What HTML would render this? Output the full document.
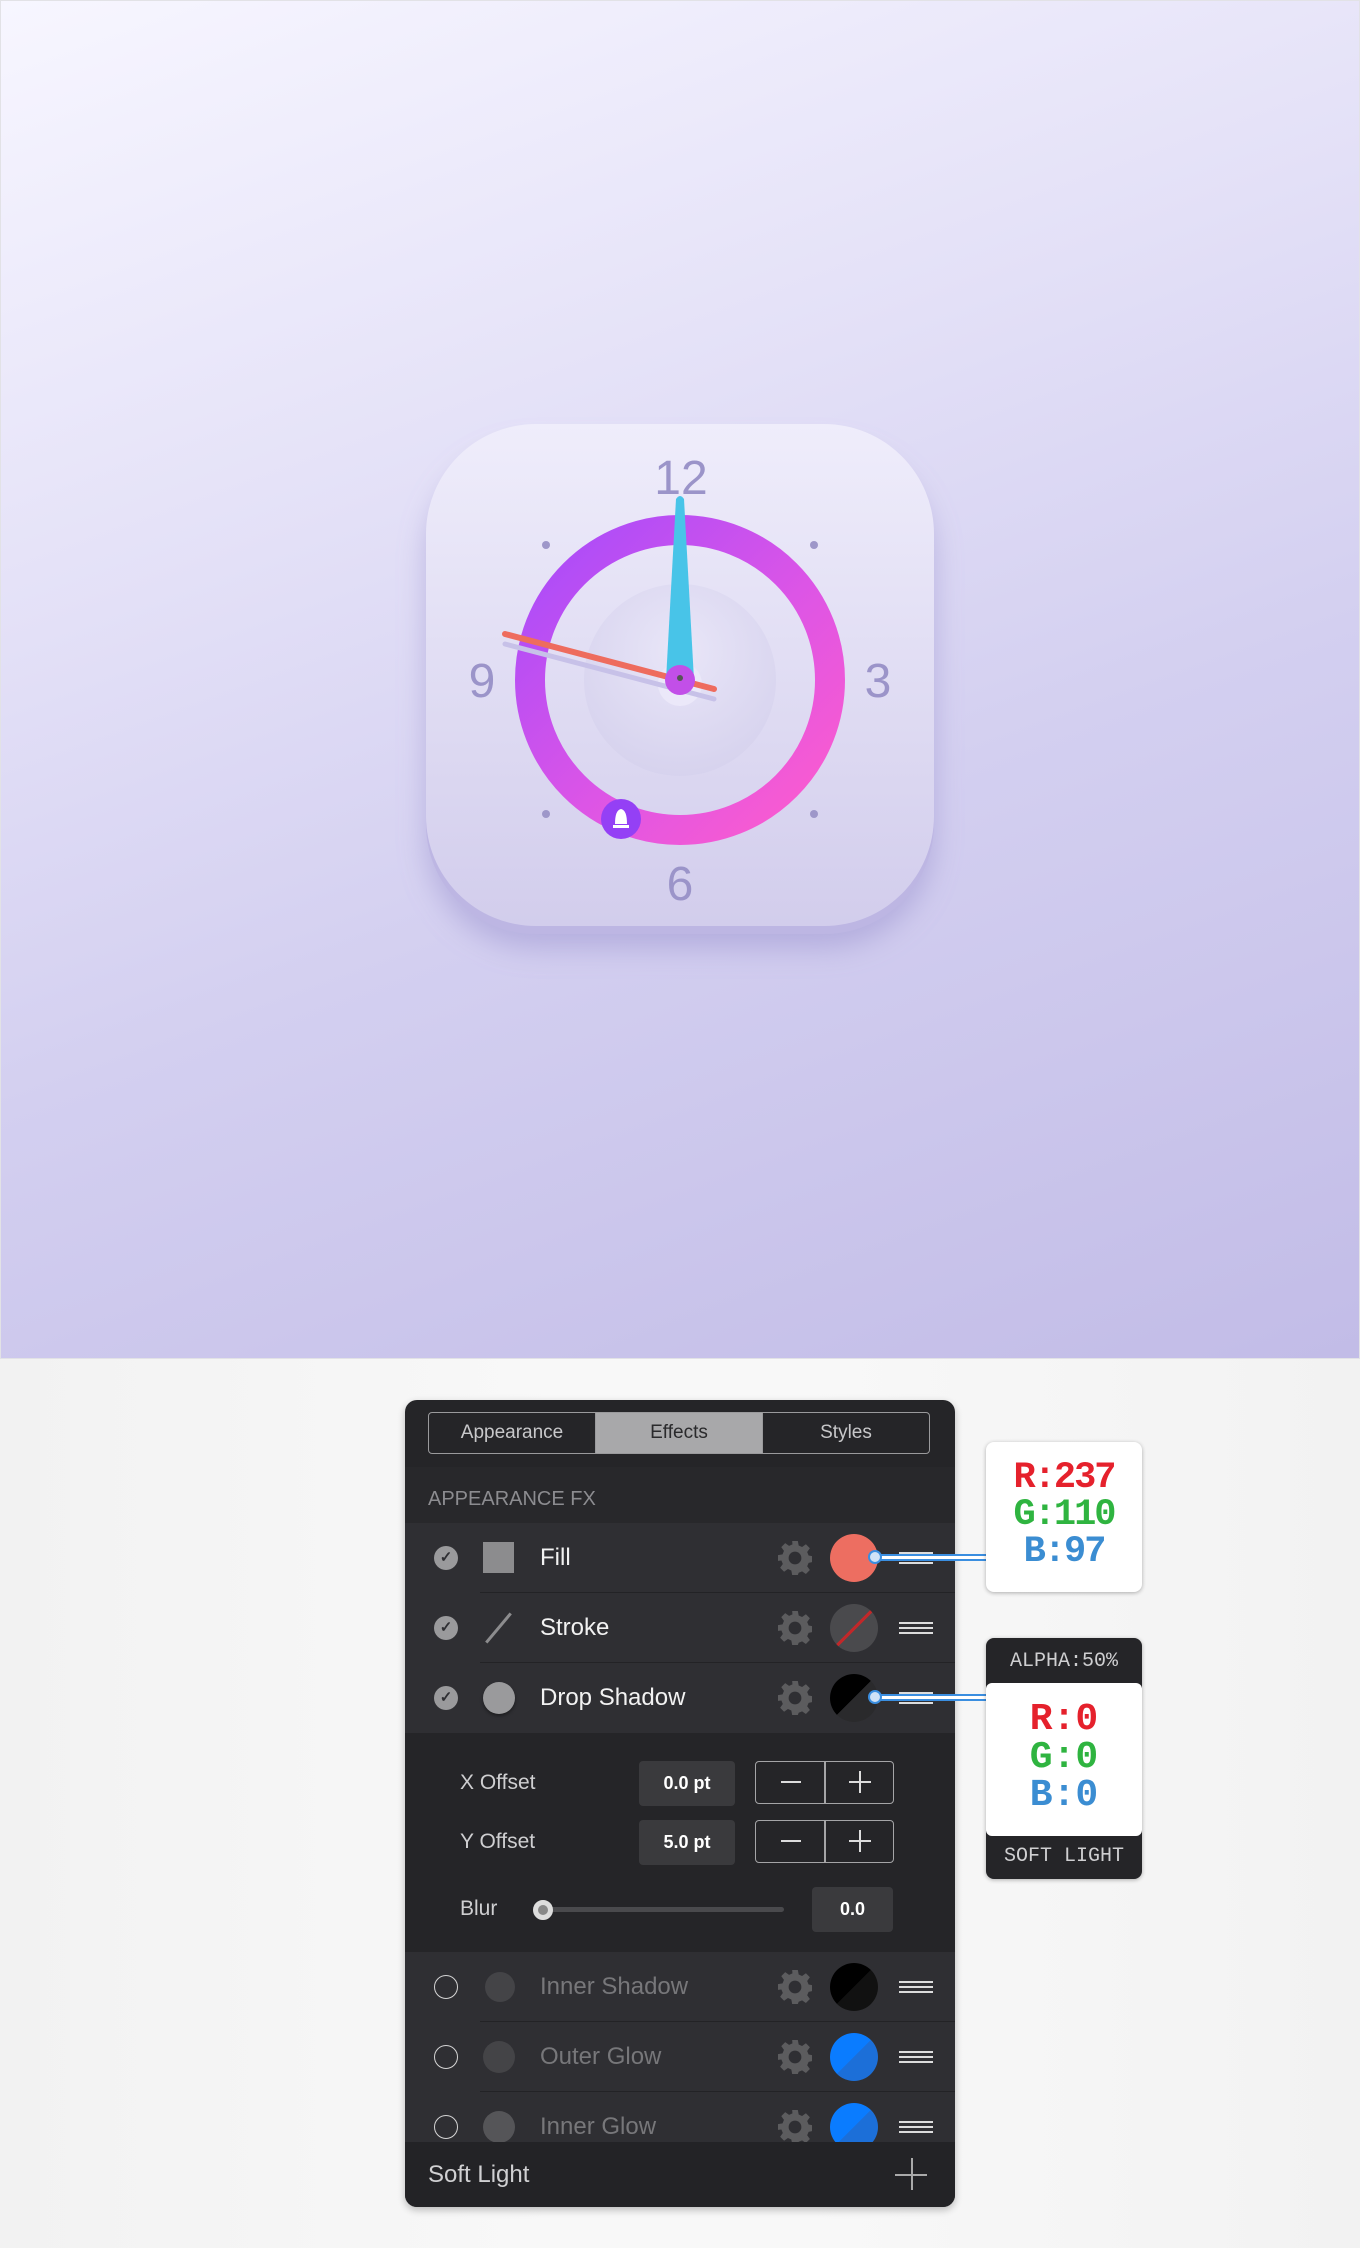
<!DOCTYPE html>
<html><head><meta charset="utf-8">
<style>
*{margin:0;padding:0;box-sizing:border-box}
body{width:1360px;height:2248px;background:#f5f5f5;font-family:"Liberation Sans",sans-serif;position:relative;overflow:hidden}
.top{position:absolute;left:0;top:0;width:1360px;height:1359px;background:linear-gradient(160deg,#f7f6ff 0%,#e3e0f7 35%,#d3cff0 60%,#c2bce7 100%);border:1px solid #e2e2e6}
.bot{position:absolute;left:0;top:1359px;width:1360px;height:889px;background:linear-gradient(90deg,#f2f2f2,#f8f8f8 40%,#f8f8f8 60%,#f2f2f2)}
.panel{position:absolute;left:405px;top:1400px;width:550px;height:807px;background:#252528;border-radius:12px;overflow:hidden;box-shadow:0 3px 8px rgba(0,0,0,.25)}
.a{position:absolute}
.tabs{left:23px;top:12px;width:502px;height:42px;border:1.5px solid #9a9a9c;border-radius:4px;display:flex;overflow:hidden}
.tabs div{flex:1;text-align:center;line-height:39px;color:#c8c8ca;font-size:19px}
.tabs div+div{border-left:1.5px solid #9a9a9c}
.row{position:absolute;left:0;width:550px;height:70px;background:#2f2f33}
.sep{position:absolute;left:75px;right:0;bottom:0;height:1.5px;background:#232326}
.lbl{position:absolute;left:135px;top:0;line-height:70px;font-size:24px;color:#f2f2f2}
.chk{position:absolute;left:29px;top:23px;width:24px;height:24px;border-radius:50%;background:#9a9a9c;color:#2f2f33;font-size:15px;text-align:center;line-height:24px;font-weight:bold}
.ring{position:absolute;left:29px;top:23px;width:24px;height:24px;border-radius:50%;border:1.5px solid #d5d5d5}
.sw{position:absolute;left:425px;top:11px;width:48px;height:48px;border-radius:50%}
.menu{position:absolute;left:494px;top:29px;width:34px;height:12px;border-top:2px solid #ddd;border-bottom:2px solid #ddd}
.menu:after{content:"";position:absolute;left:0;right:0;top:3px;height:2px;background:#ddd}
.gear{position:absolute;left:373px;top:18px}
.val{position:absolute;width:96px;height:45px;background:#3a3a3d;border-radius:4px;color:#fff;font-weight:bold;font-size:18px;text-align:center;line-height:45px}
.pm{position:absolute;left:350px;width:139px;height:43px;border:1.5px solid #a5a5a7;border-radius:4px}
.pm:before{content:"";position:absolute;left:68px;top:0;bottom:0;width:1.5px;background:#a5a5a7}
.olbl{position:absolute;left:55px;font-size:21px;color:#cfcfd1}
.mono{font-family:"Liberation Mono","DejaVu Sans Mono",monospace;font-weight:bold}
</style></head><body>
<div class="top">
<svg width="1360" height="1359" style="position:absolute;left:-1px;top:-1px">
<defs>
<linearGradient id="ig" x1="0" y1="0" x2="0" y2="1"><stop offset="0" stop-color="#efedfb"/><stop offset="1" stop-color="#d2cdec"/></linearGradient>
<linearGradient id="rg" x1="0" y1="0" x2="1" y2="1"><stop offset="0" stop-color="#a64bfb"/><stop offset="0.55" stop-color="#dc55e6"/><stop offset="1" stop-color="#ff5ccc"/></linearGradient>
<radialGradient id="dg" cx="0.5" cy="0.35" r="0.7"><stop offset="0" stop-color="#e9e6f8"/><stop offset="1" stop-color="#d5d1ed"/></radialGradient>
<filter id="sh" x="-20%" y="-20%" width="140%" height="150%"><feDropShadow dx="0" dy="14" stdDeviation="14" flood-color="#8f86c9" flood-opacity="0.45"/></filter>
</defs>
<rect x="426" y="434" width="508" height="500" rx="110" fill="#bdb6e3" filter="url(#sh)"/>
<rect x="426" y="424" width="508" height="502" rx="110" fill="url(#ig)"/>
<circle cx="680" cy="680" r="96" fill="url(#dg)"/>
<circle cx="680" cy="680" r="150" fill="none" stroke="url(#rg)" stroke-width="30"/>
<g fill="#9e97c9"><circle cx="546" cy="545" r="4"/><circle cx="814" cy="545" r="4"/><circle cx="546" cy="814" r="4"/><circle cx="814" cy="814" r="4"/></g>
<g fill="#9b94c9" font-family="Liberation Sans,sans-serif" font-size="48" text-anchor="middle">
<text x="681" y="494">12</text><text x="482" y="697">9</text><text x="878" y="697">3</text><text x="680" y="900">6</text></g>
<circle cx="680" cy="684" r="22" fill="#ebe8f9"/>
<line x1="505" y1="644" x2="714" y2="699" stroke="#c7c1e8" stroke-width="5" stroke-linecap="round"/>
<line x1="505" y1="634" x2="714" y2="689" stroke="#ee6c5e" stroke-width="6" stroke-linecap="round"/>
<path d="M676 499 Q680 493 684 499 L694 680 L666 680 Z" fill="#48c4e8"/>
<circle cx="680" cy="680" r="15" fill="#c24fe8"/>
<circle cx="680" cy="678" r="3" fill="#555"/>
<circle cx="621" cy="819" r="20" fill="#9440f5"/>
<path d="M615 824 Q615 810 621 809 Q627 810 627 824 Z M613 825 h16 v3 h-16 Z" fill="#fff"/>
</svg>
</div>
<div class="bot"></div>

<div class="panel">
<div class="a tabs"><div>Appearance</div><div style="background:#a8a8aa;color:#2a2a2c">Effects</div><div>Styles</div></div>
<div class="a" style="left:0;top:67px;width:550px;height:56px;background:#28282b"></div>
<div class="a" style="left:23px;top:88px;font-size:20px;color:#8c8c90">APPEARANCE FX</div>

<div class="row" style="top:123px"><div class="chk">✓</div><div class="a" style="left:78px;top:19px;width:31px;height:31px;background:#8c8c8e"></div><div class="lbl">Fill</div>
<svg class="gear" width="34" height="34" viewBox="0 0 24 24"><path fill="#5c5c5e" d="M10 0h4l.6 3.2 2.4 1 2.7-1.9 2.8 2.8-1.9 2.7 1 2.4 3.2.6v4l-3.2.6-1 2.4 1.9 2.7-2.8 2.8-2.7-1.9-2.4 1L14 24h-4l-.6-3.2-2.4-1-2.7 1.9-2.8-2.8 1.9-2.7-1-2.4L0 14v-4l3.2-.6 1-2.4-1.9-2.7 2.8-2.8 2.7 1.9 2.4-1zM12 7.5a4.5 4.5 0 1 0 0 9 4.5 4.5 0 0 0 0-9z"/></svg>
<div class="sw" style="background:#ed6e61"></div><div class="menu"></div><div class="sep"></div></div>

<div class="row" style="top:193px"><div class="chk">✓</div><div class="a" style="left:92px;top:16px;width:3px;height:38px;background:#8c8c8e;transform:rotate(40deg)"></div><div class="lbl">Stroke</div>
<svg class="gear" width="34" height="34" viewBox="0 0 24 24"><path fill="#5c5c5e" d="M10 0h4l.6 3.2 2.4 1 2.7-1.9 2.8 2.8-1.9 2.7 1 2.4 3.2.6v4l-3.2.6-1 2.4 1.9 2.7-2.8 2.8-2.7-1.9-2.4 1L14 24h-4l-.6-3.2-2.4-1-2.7 1.9-2.8-2.8 1.9-2.7-1-2.4L0 14v-4l3.2-.6 1-2.4-1.9-2.7 2.8-2.8 2.7 1.9 2.4-1zM12 7.5a4.5 4.5 0 1 0 0 9 4.5 4.5 0 0 0 0-9z"/></svg>
<div class="sw" style="background:linear-gradient(135deg,#4a4a4d 48%,#c0282a 48%,#c0282a 53%,#4a4a4d 53%)"></div><div class="menu"></div><div class="sep"></div></div>

<div class="row" style="top:263px"><div class="chk">✓</div><div class="a" style="left:78px;top:19px;width:32px;height:32px;border-radius:50%;background:#9a9a9c;box-shadow:0 2px 3px rgba(0,0,0,.4)"></div><div class="lbl">Drop Shadow</div>
<svg class="gear" width="34" height="34" viewBox="0 0 24 24"><path fill="#5c5c5e" d="M10 0h4l.6 3.2 2.4 1 2.7-1.9 2.8 2.8-1.9 2.7 1 2.4 3.2.6v4l-3.2.6-1 2.4 1.9 2.7-2.8 2.8-2.7-1.9-2.4 1L14 24h-4l-.6-3.2-2.4-1-2.7 1.9-2.8-2.8 1.9-2.7-1-2.4L0 14v-4l3.2-.6 1-2.4-1.9-2.7 2.8-2.8 2.7 1.9 2.4-1zM12 7.5a4.5 4.5 0 1 0 0 9 4.5 4.5 0 0 0 0-9z"/></svg>
<div class="sw" style="background:linear-gradient(135deg,#000 50%,#2a2a2c 50%)"></div><div class="menu"></div></div>

<div class="olbl" style="top:371px">X Offset</div><div class="val" style="left:234px;top:361px">0.0 pt</div>
<div class="pm" style="top:361px"><div class="a" style="left:25px;top:19px;width:20px;height:1.5px;background:#ddd"></div><div class="a" style="left:93px;top:19px;width:22px;height:1.5px;background:#ddd"></div><div class="a" style="left:103px;top:9px;width:1.5px;height:22px;background:#ddd"></div></div>
<div class="olbl" style="top:430px">Y Offset</div><div class="val" style="left:234px;top:420px">5.0 pt</div>
<div class="pm" style="top:420px"><div class="a" style="left:25px;top:19px;width:20px;height:1.5px;background:#ddd"></div><div class="a" style="left:93px;top:19px;width:22px;height:1.5px;background:#ddd"></div><div class="a" style="left:103px;top:9px;width:1.5px;height:22px;background:#ddd"></div></div>
<div class="olbl" style="top:497px">Blur</div>
<div class="a" style="left:137px;top:507px;width:242px;height:5px;border-radius:3px;background:#4a4a4d"></div>
<div class="a" style="left:128px;top:500px;width:20px;height:20px;border-radius:50%;background:#888;border:5px solid #ddd"></div>
<div class="val" style="left:407px;top:487px;width:81px">0.0</div>

<div class="row" style="top:552px"><div class="ring"></div><div class="a" style="left:80px;top:20px;width:30px;height:30px;border-radius:50%;background:#444447"></div><div class="lbl" style="color:#77777a">Inner Shadow</div>
<svg class="gear" width="34" height="34" viewBox="0 0 24 24"><path fill="#5c5c5e" d="M10 0h4l.6 3.2 2.4 1 2.7-1.9 2.8 2.8-1.9 2.7 1 2.4 3.2.6v4l-3.2.6-1 2.4 1.9 2.7-2.8 2.8-2.7-1.9-2.4 1L14 24h-4l-.6-3.2-2.4-1-2.7 1.9-2.8-2.8 1.9-2.7-1-2.4L0 14v-4l3.2-.6 1-2.4-1.9-2.7 2.8-2.8 2.7 1.9 2.4-1zM12 7.5a4.5 4.5 0 1 0 0 9 4.5 4.5 0 0 0 0-9z"/></svg>
<div class="sw" style="background:linear-gradient(135deg,#000 50%,#111 50%)"></div><div class="menu"></div><div class="sep"></div></div>
<div class="row" style="top:622px"><div class="ring"></div><div class="a" style="left:78px;top:19px;width:32px;height:32px;border-radius:50%;background:#444447"></div><div class="lbl" style="color:#77777a">Outer Glow</div>
<svg class="gear" width="34" height="34" viewBox="0 0 24 24"><path fill="#5c5c5e" d="M10 0h4l.6 3.2 2.4 1 2.7-1.9 2.8 2.8-1.9 2.7 1 2.4 3.2.6v4l-3.2.6-1 2.4 1.9 2.7-2.8 2.8-2.7-1.9-2.4 1L14 24h-4l-.6-3.2-2.4-1-2.7 1.9-2.8-2.8 1.9-2.7-1-2.4L0 14v-4l3.2-.6 1-2.4-1.9-2.7 2.8-2.8 2.7 1.9 2.4-1zM12 7.5a4.5 4.5 0 1 0 0 9 4.5 4.5 0 0 0 0-9z"/></svg>
<div class="sw" style="background:linear-gradient(135deg,#0a7cff 50%,#1c6fd8 50%)"></div><div class="menu"></div><div class="sep"></div></div>
<div class="row" style="top:692px"><div class="ring"></div><div class="a" style="left:78px;top:19px;width:32px;height:32px;border-radius:50%;background:#555558"></div><div class="lbl" style="color:#77777a">Inner Glow</div>
<svg class="gear" width="34" height="34" viewBox="0 0 24 24"><path fill="#5c5c5e" d="M10 0h4l.6 3.2 2.4 1 2.7-1.9 2.8 2.8-1.9 2.7 1 2.4 3.2.6v4l-3.2.6-1 2.4 1.9 2.7-2.8 2.8-2.7-1.9-2.4 1L14 24h-4l-.6-3.2-2.4-1-2.7 1.9-2.8-2.8 1.9-2.7-1-2.4L0 14v-4l3.2-.6 1-2.4-1.9-2.7 2.8-2.8 2.7 1.9 2.4-1zM12 7.5a4.5 4.5 0 1 0 0 9 4.5 4.5 0 0 0 0-9z"/></svg>
<div class="sw" style="background:linear-gradient(135deg,#0a7cff 50%,#1c6fd8 50%)"></div><div class="menu"></div></div>

<div class="a" style="left:0;top:742px;width:550px;height:65px;background:#232326"></div>
<div class="a" style="left:23px;top:761px;font-size:24px;color:#d0d0d2">Soft Light</div>
<div class="a" style="left:506px;top:758px;width:1.5px;height:32px;background:#aaa"></div>
<div class="a" style="left:490px;top:774px;width:32px;height:1.5px;background:#aaa"></div>
</div>

<!-- connectors -->
<div class="a" style="left:874px;top:1554px;width:112px;height:7px;border-top:2px solid #3a8ee0;border-bottom:2px solid #3a8ee0;background:#fff"></div>
<div class="a" style="left:868px;top:1550px;width:14px;height:14px;border-radius:50%;background:#cfe2f7;border:2px solid #3a8ee0"></div>
<div class="a" style="left:874px;top:1694px;width:112px;height:7px;border-top:2px solid #3a8ee0;border-bottom:2px solid #3a8ee0;background:#fff"></div>
<div class="a" style="left:868px;top:1690px;width:14px;height:14px;border-radius:50%;background:#cfe2f7;border:2px solid #3a8ee0"></div>

<div class="a mono" style="left:986px;top:1442px;width:156px;height:150px;background:#fff;border-radius:8px;box-shadow:0 1px 4px rgba(0,0,0,.3);text-align:center;font-size:37px;line-height:37px;padding-top:18px;letter-spacing:-2px">
<div style="color:#e5212c">R:237</div><div style="color:#2fb440">G:110</div><div style="color:#3b8dd2">B:97</div></div>

<div class="a mono" style="left:986px;top:1638px;width:156px;height:241px;background:#252528;border-radius:8px;box-shadow:0 1px 4px rgba(0,0,0,.3);text-align:center;color:#cfcfd1;font-size:20px;font-weight:normal">
<div style="margin-top:12px">ALPHA:50%</div>
<div class="a mono" style="left:0;top:45px;width:156px;height:153px;background:#fff;border-radius:6px;font-size:38px;line-height:38px;padding-top:18px"><div style="color:#e5212c">R:0</div><div style="color:#2fb440">G:0</div><div style="color:#3b8dd2">B:0</div></div>
<div class="a" style="left:0;top:207px;width:156px;font-weight:normal">SOFT LIGHT</div>
</div>
</body></html>
